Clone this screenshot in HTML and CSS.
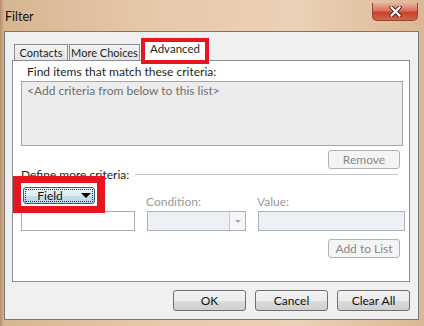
FILE: index.html
```html
<!DOCTYPE html>
<html lang="en">
<head>
    <meta charset="UTF-8">
    <title>Filter</title>
    <link rel="stylesheet" href="styles.css">
</head>
<body>
    <div class="window">
        <div class="titlebar">
            <span class="title">Filter</span>
            <button class="close-btn" aria-label="Close">
                <svg width="13" height="11" viewBox="0 0 13 11">
                    <path d="M2.5 1.5 L10.5 9.5 M10.5 1.5 L2.5 9.5" stroke="#4a2018" stroke-width="4" stroke-linecap="square"/>
                    <path d="M2.5 1.5 L10.5 9.5 M10.5 1.5 L2.5 9.5" stroke="#ffffff" stroke-width="2.2" stroke-linecap="square"/>
                </svg>
            </button>
        </div>

        <div class="dialog">
            <div class="tabs">
                <div class="tab contacts">Contacts</div>
                <div class="tab more">More Choices</div>
                <div class="tab active marked">Advanced</div>
            </div>

            <div class="panel">
                <div class="label top-label">Find items that match these criteria:</div>
                <div class="criteria-list">&lt;Add criteria from below to this list&gt;</div>
                <div class="btn-row">
                    <button class="btn disabled">Remove</button>
                </div>

                <div class="group-title">
                    <span>Define more criteria:</span>
                    <span class="rule"></span>
                </div>

                <div class="criteria-grid">
                    <div class="field-cell marked-field">
                        <button class="field-btn"><span class="focus">Field <span class="arrow"></span></span></button>
                    </div>
                    <div class="label dim">Condition:</div>
                    <div class="label dim">Value:</div>

                    <input type="text" class="textbox">
                    <div class="select disabled-box">
                        <span class="select-drop"><span class="small-arrow"></span></span>
                    </div>
                    <div class="textbox disabled-box"></div>
                </div>

                <div class="btn-row add-row">
                    <button class="btn disabled">Add to List</button>
                </div>
            </div>

            <div class="footer">
                <button class="btn">OK</button>
                <button class="btn">Cancel</button>
                <button class="btn">Clear All</button>
            </div>
        </div>
    </div>
</body>
</html>
```

FILE: styles.css
```css
*, *::before, *::after {
    box-sizing: border-box;
}
body {
    margin: 0;
    padding: 0;
    font-family: 'Lato', 'Noto Sans', sans-serif;
    font-size: 12px;
    color: #1e1e1e;
}
.window {
    width: 424px;
    height: 326px;
    padding: 0 5px 6px 4px;
    background: linear-gradient(90deg, #b48d69 0, #d7b591 4px, #e8caac 40%, #ebd1b6 70%, #dbb894 100%);
    display: flex;
    flex-direction: column;
}
.titlebar {
    height: 31px;
    flex: none;
    display: flex;
    justify-content: space-between;
    align-items: flex-start;
}
.title {
    margin: 9px 0 0 1px;
    font-size: 12.5px;
    color: #111;
}
.close-btn {
    width: 46px;
    height: 18px;
    margin: 3px 1px 0 0;
    border: 1px solid #8a4a3c;
    border-top: none;
    border-radius: 0 0 5px 5px;
    background: linear-gradient(#eab1a2 0, #dc6f58 45%, #c8442a 55%, #d6624a 100%);
    display: flex;
    align-items: center;
    justify-content: center;
    padding: 0;
}
.dialog {
    flex: 1;
    background: #f0f0f0;
    border: 1px solid #777;
    padding: 0 8px 0 7px;
    display: flex;
    flex-direction: column;
}
.tabs {
    display: flex;
    align-items: flex-end;
    height: 28px;
    flex: none;
    padding-left: 2px;
}
.tab {
    height: 17px;
    line-height: 16px;
    text-align: center;
    font-size: 11px;
    border: 1px solid #898c95;
    border-bottom: none;
    margin-right: 1px;
    background: linear-gradient(#f3f3f3, #e3e3e3);
    margin-bottom: -1px;
}
.tab.contacts {
    width: 54px;
}
.tab.more {
    width: 71px;
}
.tab.active {
    width: 68px;
    height: 22px;
    line-height: 18px;
    font-size: 11.5px;
    background: #fff;
    position: relative;
    z-index: 2;
}
.marked::after {
    content: "";
    position: absolute;
    left: -1px;
    right: -1px;
    top: -2px;
    bottom: -3px;
    border: 4px solid #e8151f;
}
.panel {
    background: #fff;
    border: 1px solid #898c95;
    height: 222px;
    flex: none;
    padding: 0 6px 0 8px;
    position: relative;
    z-index: 1;
}
.label {
    height: 15px;
    line-height: 15px;
}
.top-label {
    margin: 3px 0 0 6px;
}
.criteria-list {
    margin-top: 2px;
    height: 65px;
    border: 1px solid #a5a5a5;
    background: #ececec;
    color: #6f6f6f;
    padding: 1px 5px;
}
.btn-row {
    display: flex;
    justify-content: flex-end;
    padding-right: 3px;
    margin-top: 4px;
}
.btn {
    width: 73px;
    height: 21px;
    font-family: inherit;
    font-size: 12px;
    color: #111;
    border: 1px solid #707070;
    border-radius: 3px;
    background: linear-gradient(#f3f3f3 0, #ebebeb 50%, #dcdcdc 51%, #cfcfcf 100%);
    padding: 0;
}
.btn.disabled {
    width: 72px;
    height: 19px;
    color: #8a8a8a;
    border-color: #adb2b5;
    background: #f4f4f4;
}
.group-title {
    display: flex;
    align-items: center;
    height: 14px;
    margin-top: -2px;
    white-space: nowrap;
}
.rule {
    flex: 1;
    border-top: 1px solid #c6c6c6;
    margin: 1px 5px 0 6px;
}
.criteria-grid {
    display: grid;
    grid-template-columns: 114px 99px 147px;
    grid-template-rows: 24px 20px;
    column-gap: 12px;
    align-items: end;
    margin-top: 6px;
}
.criteria-grid .label {
    margin: 0 0 2px -1px;
}
.dim {
    color: #9b9b9b;
}
.field-cell {
    position: relative;
    height: 24px;
}
.marked-field::after {
    content: "";
    position: absolute;
    left: -8px;
    top: -11px;
    width: 92px;
    height: 37px;
    border-style: solid;
    border-color: #e8151f;
    border-width: 7px 8px 7px 8px;
}
.field-btn {
    position: absolute;
    left: 2px;
    top: 0;
    width: 72px;
    height: 17px;
    padding: 1px;
    border: 1px solid #2c628b;
    border-radius: 3px;
    background: linear-gradient(#eaf5fb 0, #dcecf5 50%, #c7dde9 51%, #bdd6e4 100%);
    font-family: inherit;
    font-size: 12px;
    color: #111;
}
.focus {
    display: flex;
    align-items: center;
    justify-content: center;
    gap: 18px;
    height: 100%;
    border: 1px dotted #333;
    padding-left: 10px;
}
.arrow {
    width: 0;
    height: 0;
    border-left: 5px solid transparent;
    border-right: 5px solid transparent;
    border-top: 5px solid #000;
}
.textbox {
    height: 20px;
    border: 1px solid #abadb3;
    margin: 0;
    padding: 0;
    width: 100%;
    background: #fff;
}
.disabled-box {
    background: #ecf0f4;
    border-color: #aab1ba;
}
.select {
    height: 20px;
    border: 1px solid #aab1ba;
    display: flex;
    justify-content: flex-end;
}
.select-drop {
    width: 16px;
    border-left: 1px solid #c5cad1;
    background: #f4f6f8;
    display: flex;
    align-items: center;
    justify-content: center;
}
.small-arrow {
    width: 0;
    height: 0;
    border-left: 3px solid transparent;
    border-right: 3px solid transparent;
    border-top: 3px solid #a8a8a8;
}
.add-row {
    margin-top: 8px;
}
.footer {
    display: flex;
    justify-content: flex-end;
    gap: 9px;
    margin-top: 8px;
    padding-right: 0;
}
```
